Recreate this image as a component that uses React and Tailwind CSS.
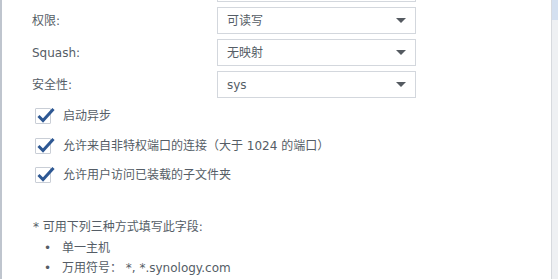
import React from 'react'

const font = { fontFamily: '"DejaVu Sans", "Noto Sans CJK SC", sans-serif' }

const Select = ({ value }) => (
  <div className="w-[199px] h-[27px] border border-[#d3d7dd] bg-white flex items-center justify-between pl-[9px] pr-[9px] text-[12px] text-[#555d66]">
    <span>{value}</span>
    <svg width="10" height="6" viewBox="0 0 10 6">
      <path d="M0 0 L10 0 L5 5 Z" fill="#555a61" />
    </svg>
  </div>
)

const Row = ({ label, value }) => (
  <div className="flex items-center h-[27px]">
    <div className="w-[185px] text-[12px] text-[#555d66]">{label}</div>
    <Select value={value} />
  </div>
)

const Check = ({ label }) => (
  <div className="flex items-center h-[16px] gap-[12px]">
    <div className="relative w-[16px] h-[16px] border border-[#c9ced6] bg-white rounded-[1px]">
      <svg className="absolute -top-[3px] left-[1px]" width="18" height="18" viewBox="0 0 18 18">
        <path d="M1.5 10 L6 14.5 L16.5 3" fill="none" stroke="#2e5893" strokeWidth="3" />
      </svg>
    </div>
    <span className="text-[12px] text-[#555d66]">{label}</span>
  </div>
)

export default function App() {
  return (
    <div className="w-[558px] h-[279px] bg-white flex overflow-hidden" style={font}>
      <div className="w-[2px] bg-[#bfc5ce]" />
      <div className="flex-1 overflow-hidden">
        <div className="pl-[30px] -mt-[25px] flex flex-col gap-[5px]">
          <Row label="" value="" />
          <Row label="权限:" value="可读写" />
          <Row label="Squash:" value="无映射" />
          <Row label="安全性:" value="sys" />
        </div>
        <div className="pl-[33px] mt-[10px] flex flex-col gap-[13.5px]">
          <Check label="启动异步" />
          <Check label="允许来自非特权端口的连接（大于 1024 的端口）" />
          <Check label="允许用户访问已装载的子文件夹" />
        </div>
        <div className="pl-[31px] mt-[34px] text-[12px] text-[#555d66] leading-[20px]">
          <div>* 可用下列三种方式填写此字段:</div>
          <div className="flex pl-[11px] mt-[1px]"><span className="w-[18px]">•</span>单一主机</div>
          <div className="flex pl-[11px]"><span className="w-[18px]">•</span>万用符号：&nbsp;*, *.synology.com</div>
        </div>
      </div>
      <div className="w-[1px] bg-[#d6d9de]" />
      <div className="w-[6px] bg-[#eef0f3] flex flex-col">
        <div className="h-[20px] bg-[#d4e0f0]" />
      </div>
    </div>
  )
}
